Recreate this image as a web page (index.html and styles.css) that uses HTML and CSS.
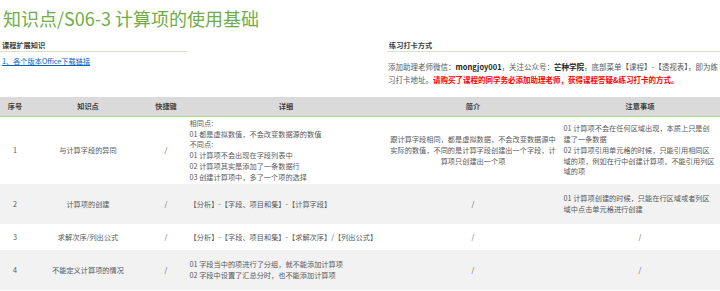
FILE: index.html
```html
<!DOCTYPE html>
<html lang="zh-CN">
<head>
<meta charset="utf-8">
<title>知识点/S06-3 计算项的使用基础</title>
<link rel="stylesheet" href="styles.css">
</head>
<body>
<h1 class="title">知识点/S06-3 计算项的使用基础</h1>
<div class="info">
  <section class="block">
    <h2 class="block-title">课程扩展知识</h2>
    <div class="block-body">
      <a class="link" href="#">1、各个版本Office下载链接</a>
    </div>
  </section>
  <section class="block">
    <h2 class="block-title">练习打卡方式</h2>
    <p class="block-body text">添加助理老师微信：<b class="strong">mongjoy001</b>，关注公众号：<b class="strong">芒种学院</b>，底部菜单【课程】-【透视表】，即为练<br>习打卡地址。<b class="warn">请购买了课程的同学务必添加助理老师，获得课程答疑&amp;练习打卡的方式。</b></p>
  </section>
</div>
<table class="grid">
  <colgroup>
    <col class="c-no"><col class="c-point"><col class="c-key"><col class="c-detail"><col class="c-intro"><col class="c-note">
  </colgroup>
  <thead>
    <tr class="head">
      <th>序号</th><th>知识点</th><th>快捷键</th><th>详细</th><th>简介</th><th>注意事项</th>
    </tr>
  </thead>
  <tbody>
    <tr class="r1">
      <td class="center">1</td>
      <td class="center">与计算字段的异同</td>
      <td class="center">/</td>
      <td>相同点:<br>01 都是虚拟数值，不会改变数据源的数值<br>不同点:<br>01 计算项不会出现在字段列表中<br>02 计算项其实是添加了一条数据行<br>03 创建计算项中，多了一个项的选择</td>
      <td class="center">跟计算字段相同，都是虚拟数据，不会改变数据源中实际的数值，不同的是计算字段创建出一个字段，计算项只创建出一个项</td>
      <td>01 计算项不会在任何区域出现，本质上只是创建了一条数据<br>02 计算项引用单元格的时候，只能引用相同区域的项，例如在行中创建计算项，不能引用列区域的项</td>
    </tr>
    <tr class="r2 alt">
      <td class="center">2</td>
      <td class="center">计算项的创建</td>
      <td class="center">/</td>
      <td>【分析】-【字段、项目和集】-【计算字段】</td>
      <td class="center">/</td>
      <td>01 计算项创建的时候，只能在行区域或者列区域中点击单元格进行创建</td>
    </tr>
    <tr class="r3">
      <td class="center">3</td>
      <td class="center">求解次序/列出公式</td>
      <td class="center">/</td>
      <td>【分析】-【字段、项目和集】-【求解次序】/【列出公式】</td>
      <td class="center">/</td>
      <td class="center">/</td>
    </tr>
    <tr class="r4 alt">
      <td class="center">4</td>
      <td class="center">不能定义计算项的情况</td>
      <td class="center">/</td>
      <td>01 字段当中的项进行了分组，就不能添加计算项<br>02 字段中设置了汇总分时，也不能添加计算项</td>
      <td class="center">/</td>
      <td class="center">/</td>
    </tr>
  </tbody>
</table>
</body>
</html>
```

FILE: styles.css
```css
* { box-sizing: border-box; }
html, body { margin: 0; padding: 0; background: #ffffff; }
body {
  width: 720px;
  height: 291px;
  overflow: hidden;
  font-family: "Noto Sans CJK SC", "Noto Sans", sans-serif;
  font-size: 7.2px;
  line-height: 10.8px;
  color: #595959;
}
.title {
  margin: 0;
  padding: 5px 0 0 3px;
  height: 36px;
  font-size: 18px;
  line-height: 26px;
  font-weight: 400;
  color: #70ad47;
}
.info {
  display: grid;
  grid-template-columns: 188px 333px;
  column-gap: 199px;
  height: 61px;
}
.block-title {
  margin: 0;
  padding: 3.5px 0 0 2px;
  height: 16px;
  font-size: 7.2px;
  line-height: 10.8px;
  font-weight: 700;
  color: #404040;
  border-bottom: 1px solid #d3e6c6;
}
.block-body { margin: 0; padding: 4px 0 0 2px; }
.link { color: #0563c1; text-decoration: underline; }
.text { font-size: 7.5px; line-height: 12.6px; padding: 9px 0 0 1px; }
.strong { color: #262626; font-weight: 700; }
.warn { color: #ff0000; font-weight: 700; }

.grid {
  width: 720px;
  border-collapse: collapse;
  table-layout: fixed;
}
.c-no { width: 30px; }
.c-point { width: 116px; }
.c-key { width: 40px; }
.c-detail { width: 200px; }
.c-intro { width: 174px; }
.c-note { width: 160px; }
.grid th, .grid td {
  padding: 0 3.6px;
  vertical-align: middle;
  text-align: left;
}
.grid th {
  height: 19px;
  background: #dadada;
  border-bottom: 1px solid #a9d18e;
  font-weight: 700;
  color: #404040;
  text-align: center;
}
.grid .center { text-align: center; }
.alt td { background: #f2f2f2; }
.r1 td { height: 68px; }
.r2 td { height: 40px; }
.r3 td { height: 26px; }
.r4 td { height: 40px; }
```
